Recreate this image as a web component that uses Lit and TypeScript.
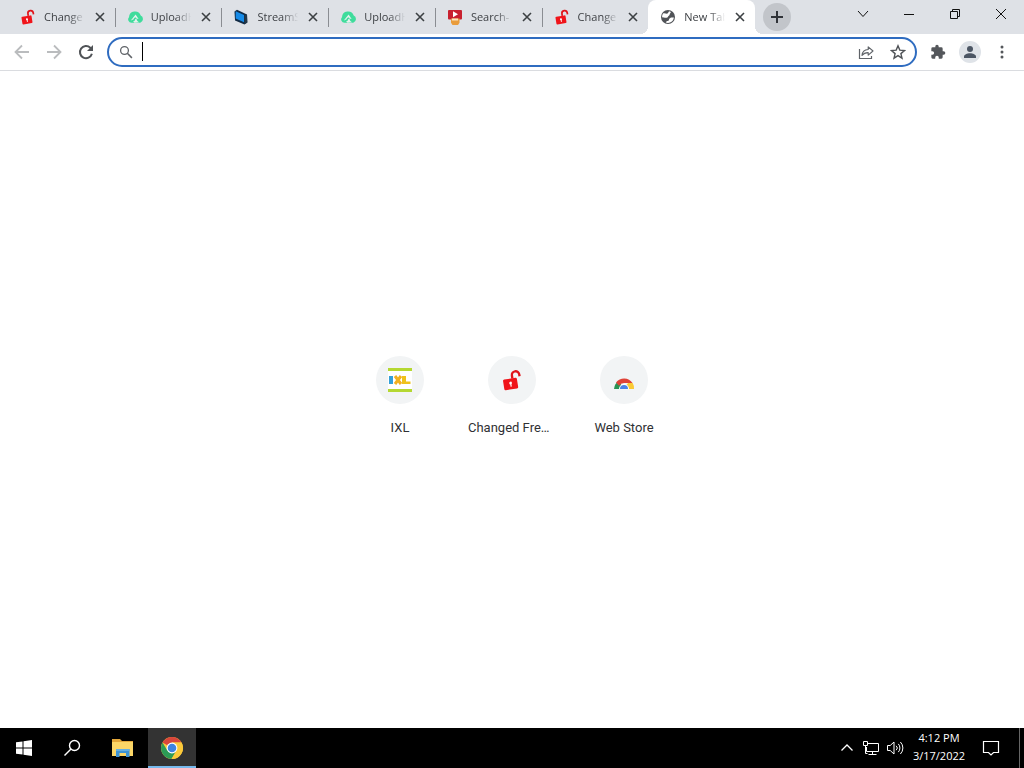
import { LitElement, html, css, svg, TemplateResult } from "lit";
import { customElement, property } from "lit/decorators.js";

const icon = (box: number, body: TemplateResult, size = box) =>
  html`<svg width=${size} height=${size} viewBox="0 0 ${box} ${box}" fill="none" aria-hidden="true">${body}</svg>`;

const lock = svg`<g transform="rotate(-9 8 9)"><path d="M8.6 7V4.8a2.7 2.7 0 0 1 5.4 0v1.4" stroke="#e0141a" stroke-width="1.700"/><rect x="1.600" y="6.800" width="10.200" height="7.800" rx="1" fill="#f0141a"/><circle cx="6.800" cy="10" r="1" fill="#fff"/><path d="M6.400 10h.9v2.700h-.9z" fill="#fff"/></g>`;
const cloud = svg`<path d="M4.500 13.700A3.300 3.300 0 0 1 2 8.200 6 6 0 0 1 13.700 6.600a3.800 3.800 0 0 1-.4 7.100z" fill="#3fdc9c"/><path d="M3.800 11.500 8.600 5.600l3 4.300-2.100-.3c.1 2 .9 3 2.600 3.600l-4.600.6c-1.300-.9-1.600-2-1.300-3.300z" fill="#e6f1ee"/><path d="M6 12.200c-.4-1.300 1-2.900 2.300-3.900l1.700 1.300-1.700.3c-.2 1.400-.9 2.200-2.300 2.300z" fill="#3fdc9c"/>`;
const stream = svg`<path d="M1.500 2.500 4 .8l10 4.600.5 8.200-3 2L2 11.500z" fill="#122b45"/><path d="M2.700 2.300 11 6v7.200L2.700 9.500z" fill="#168be8"/><path d="M11.400 6.300 14 5.700v7.800l-2.600 1.600z" fill="#243746"/>`;
const searchPlay = svg`<path d="M1 2a1 1 0 0 1 1-1h12a1 1 0 0 1 1 1v7.500a1 1 0 0 1-1 1H2a1 1 0 0 1-1-1z" fill="#c8202f"/><path d="M6 2.300v6l5-3z" fill="#fff"/><path d="M4 9.500h8.500v4.300L11 16H5.500L4 13.800z" fill="#e99c3c"/><path d="M5 9.500h6v2H5z" fill="#fbe3bd"/>`;
const globe = svg`<circle cx="8" cy="8" r="7" fill="#505357"/><path d="M3 4.500C4.500 3.800 6 4.800 7.300 4.600 8.500 4.400 8 2.600 9.500 2.300l1.400.6c-.2 1.400-1.500 1.600-1.200 2.700.3.900-1.300 1.300-1.700 2.100C7.600 8.700 6.500 9 5 8.700 4 8.500 2.800 8.200 2 8.400c0-1.500.3-2.800 1-3.900z" fill="#fff"/><path d="M9.800 9.200c1.300-1 2.700-.6 4.100-.7-.3 2.200-1.500 3.900-3.300 4.800-1.500.8-3.300.9-4.800.3.200-1 .9-1.600 2-1.600 1.500 0 .7-1.900 2-2.800z" fill="#fff"/>`;

const plusIcon = icon(14, svg`<path d="M7 1v12M1 7h12" stroke="#303338" stroke-width="2"/>`);
const tabClose = icon(10, svg`<path d="m1 1 8 8M9 1 1 9" stroke="#3c4043" stroke-width="1.600"/>`);

@customElement("browser-tab")
class BrowserTab extends LitElement {
  @property() label = "";
  @property({ type: Boolean, reflect: true }) active = false;
  @property({ type: Boolean, reflect: true }) divided = false;
  @property({ attribute: false }) glyph: TemplateResult = globe;

  static styles = css`
    :host { display: block; flex: 1 1 0; min-width: 0; position: relative; }
    .tab { display: flex; align-items: center; height: 34px; box-sizing: border-box; padding: 0 7px 0 12px; }
    :host([active]) .tab { background: #fff; border-radius: 8px 8px 0 0; }
    :host([active])::before, :host([active])::after {
      content: ""; position: absolute; bottom: 0; width: 8px; height: 8px;
    }
    :host([active])::before { left: -8px; background: radial-gradient(circle at 0 0, transparent 8px, #fff 8px); }
    :host([active])::after { right: -8px; background: radial-gradient(circle at 100% 0, transparent 8px, #fff 8px); }
    :host([divided])::after {
      content: ""; position: absolute; right: -1px; top: 8px; width: 1px; height: 19px; background: #8a8d92;
    }
    .glyph { flex: none; width: 16px; height: 16px; }
    .title {
      flex: 1; min-width: 0; margin: 0 6px 0 8px; padding: 0; border: 0; background: none; text-align: left;
      font: 11px/16px "Open Sans", "Noto Sans", sans-serif; color: #3c3f43; white-space: nowrap; overflow: hidden;
      -webkit-mask-image: linear-gradient(90deg, #000 60%, transparent 98%);
      mask-image: linear-gradient(90deg, #000 60%, transparent 98%);
    }
    .close { flex: none; display: grid; place-items: center; width: 16px; height: 16px; padding: 0; border: 0; background: none; }
  `;

  render() {
    return html`<div class="tab">
      <span class="glyph">${icon(16, this.glyph)}</span>
      <button class="title">${this.label}</button>
      <button class="close" aria-label="Close tab">${tabClose}</button>
    </div>`;
  }
}

const tabs = [
  { label: "Change", glyph: lock },
  { label: "UploadH", glyph: cloud },
  { label: "StreamS", glyph: stream },
  { label: "UploadH", glyph: cloud },
  { label: "Search-", glyph: searchPlay },
  { label: "Change", glyph: lock },
  { label: "New Tab", glyph: globe },
];

const ixl = svg`<path d="M0 0h24v24H0z" fill="#fff"/><path d="M0 0h24v3H0zM0 21h24v3H0z" fill="#b5d832"/><path d="M1 8h4v8H1z" fill="#35a0d8"/><path d="m7 8 6 8M13 8l-6 8" stroke="#f2b01e" stroke-width="3"/><path d="M14 8h4v5.500h4.500V16H14z" fill="#eec21b"/>`;
const store = svg`<path d="M2 21a10 10 0 0 1 5-8l3 5.200A4 4 0 0 0 8 21z" fill="#2a9354"/><path d="M4 14.500a10 10 0 0 1 16.500.5H12a6 6 0 0 0-5 2.800z" fill="#df4237"/><path d="M16 15h4.700a10 10 0 0 1 1.300 6h-5.500a5 5 0 0 0-2-4z" fill="#fbc935"/><path d="M7 21a5 5 0 0 1 10 0z" fill="#fff"/><path d="M8 21a4 4 0 0 1 8 0z" fill="#4a82e8"/>`;

const shortcuts = [
  { name: "IXL", art: icon(24, ixl) },
  { name: "Changed Free Proxy", art: icon(16, lock, 22) },
  { name: "Web Store", art: icon(24, store) },
];

@customElement("app-root")
class AppRoot extends LitElement {
  static styles = css`
    :host { display: flex; flex-direction: column; min-height: 100vh; background: #fff; color: #202124; font-family: Roboto, sans-serif; }
    button { padding: 0; border: 0; background: none; color: inherit; font: inherit; }
    svg { display: block; }
    .strip { display: flex; height: 34px; padding-left: 8px; background: #dee1e6; }
    .tabs { display: flex; flex: 0 1 747px; min-width: 0; }
    .add { flex: none; display: grid; place-items: center; width: 28px; height: 28px; margin: 3px 0 0 8px; border-radius: 50%; background: #c2c5ca; }
    .window { display: flex; flex: none; margin-left: auto; }
    .window button { display: grid; place-items: center; width: 46px; height: 28px; }

    .toolbar { display: flex; align-items: center; height: 36px; padding: 0 6px; border-bottom: 1px solid #dadce0; }
    .tool { flex: none; display: grid; place-items: center; width: 32px; height: 32px; }
    .avatar { display: grid; place-items: center; width: 22px; height: 22px; border-radius: 50%; background: #dfe3e8; }
    .omnibox { flex: 1; min-width: 0; display: flex; align-items: center; box-sizing: border-box; height: 30px; margin: 0 5px; padding: 0 1px 0 10px; border: 2px solid #2f6cc0; border-radius: 15px; }
    .omnibox label { flex: none; }
    .caret { flex: none; width: 1px; height: 19px; margin: 0 0 2px 9px; background: #000; }
    .omnibox input { flex: 1; min-width: 0; padding: 0; border: 0; outline: 0; background: none; font: 14px/20px Roboto, sans-serif; }
    .omnibox .tool { height: 26px; }

    main { flex: 1; display: flex; align-items: center; justify-content: center; padding-bottom: 7px; }
    .shortcut { display: flex; flex-direction: column; align-items: center; gap: 16px; width: 112px; color: #303134; text-decoration: none; }
    .disc { display: grid; place-items: center; width: 48px; height: 48px; border-radius: 50%; background: #f2f4f5; }
    .name { width: 88px; overflow: hidden; text-overflow: ellipsis; white-space: nowrap; text-align: center; font-size: 13px; line-height: 16px; }

    .taskbar { display: flex; height: 40px; background: #000; color: #fff; }
    .app { display: grid; place-items: center; width: 48px; height: 40px; }
    .app.files { width: 52px; padding-left: 2px; }
    .app.running { box-sizing: border-box; padding-top: 2px; background: #333; border-bottom: 2px solid #76b9ed; }
    .tray { display: flex; margin-left: auto; }
    .status { display: grid; place-items: center; width: 24px; height: 40px; }
    .clock { width: 64px; text-align: center; font: 11px/18px "Open Sans", "Noto Sans", sans-serif; padding-bottom: 2px; }
    .clock time { display: block; }
    .notices { display: grid; place-items: center; width: 40px; height: 40px; }
    .peek { width: 5px; height: 40px; margin-left: 8px; border-left: 1px solid #666; }
  `;

  render() {
    return html`
      <header>
        <div class="strip">
          <nav class="tabs" aria-label="Tabs">
            ${tabs.map((t, i) => html`<browser-tab .label=${t.label} .glyph=${t.glyph} ?active=${i === tabs.length - 1} ?divided=${i < tabs.length - 2}></browser-tab>`)}
          </nav>
          <button class="add" aria-label="New tab">${plusIcon}</button>
          <div class="window">
            <button aria-label="Search tabs">${icon(12, svg`<path d="m1 3 5 5.500L11 3" stroke="#111"/>`)}</button>
            <button aria-label="Minimize">${icon(10, svg`<path d="M0 5.500h10" stroke="#111"/>`)}</button>
            <button aria-label="Restore">${icon(10, svg`<path d="M.5 2.500h7v7h-7zM2.500 2.500v-2h7v7h-2" stroke="#111"/>`)}</button>
            <button aria-label="Close">${icon(12, svg`<path d="m1 1 10 10M11 1 1 11" stroke="#111"/>`)}</button>
          </div>
        </div>
        <div class="toolbar">
          <button class="tool" aria-label="Back">${icon(16, svg`<path d="M15 8H2M8 1.500 1.500 8 8 14.500" stroke="#babcbe" stroke-width="1.800"/>`)}</button>
          <button class="tool" aria-label="Forward">${icon(16, svg`<path d="M1 8h13M8 1.500 14.500 8 8 14.500" stroke="#babcbe" stroke-width="1.800"/>`)}</button>
          <button class="tool" aria-label="Reload">${icon(16, svg`<path d="M13.900 9.800A6.100 6.100 0 1 1 12.300 3.700L14 5.400" stroke="#505357" stroke-width="2"/><path d="M15 1v6H9z" fill="#505357"/>`)}</button>
          <div class="omnibox">
            <label for="address" aria-label="Search or type a URL">${icon(14, svg`<circle cx="5.500" cy="5.500" r="3.900" stroke="#5f6368" stroke-width="1.300"/><path d="m8.300 8.300 4.600 4.600" stroke="#5f6368" stroke-width="1.500"/>`)}</label>
            <span class="caret"></span>
            <input id="address" type="text" autocomplete="off" />
            <button class="tool" aria-label="Share">${icon(16, svg`<path d="M1.500 5v9.500h12V12" stroke="#5f6368" stroke-width="1.200"/><path d="M4 11.500c.3-4 2.600-5.900 6.200-6V2.800L15 7l-4.800 4.200V8.600C7.500 8.500 5.600 9.400 4 11.500z" stroke="#5f6368" stroke-width="1.100" stroke-linejoin="round"/>`)}</button>
            <button class="tool" aria-label="Bookmark">${icon(16, svg`<path d="m8 1.800 1.800 4.300 4.700.4-3.600 3.100 1.100 4.600L8 11.700l-4 2.500 1.100-4.600-3.600-3.100 4.700-.4z" stroke="#505357" stroke-width="1.400"/>`)}</button>
          </div>
          <button class="tool" aria-label="Extensions">${icon(24, svg`<path d="M20.500 11H19V7a2 2 0 0 0-2-2h-4V3.500a2.500 2.500 0 0 0-5 0V5H4a2 2 0 0 0-2 2v3.800h1.500a2.700 2.700 0 0 1 0 5.400H2V20a2 2 0 0 0 2 2h3.800v-1.500a2.700 2.700 0 0 1 5.400 0V22H17a2 2 0 0 0 2-2v-4h1.500a2.500 2.500 0 0 0 0-5z" fill="#54575b"/>`, 16)}</button>
          <button class="tool" aria-label="Profile"><span class="avatar">${icon(14, svg`<circle cx="7" cy="4" r="3" fill="#4c5664"/><path d="M1 13v-1.500C1 9.500 4 8.200 7 8.200s6 1.300 6 3.300V13z" fill="#4c5664"/>`)}</span></button>
          <button class="tool" aria-label="Menu">${icon(16, svg`<circle cx="8" cy="3" r="1.500" fill="#54575b"/><circle cx="8" cy="8" r="1.500" fill="#54575b"/><circle cx="8" cy="13" r="1.500" fill="#54575b"/>`)}</button>
        </div>
      </header>
      <main>
        ${shortcuts.map((s) => html`<a class="shortcut" href="#"><span class="disc">${s.art}</span><span class="name">${s.name}</span></a>`)}
      </main>
      <footer class="taskbar">
        <button class="app" aria-label="Start">${icon(16, svg`<path d="M0 2.300 6.500 1.400v6.100H0zM7.500 1.200 16 0v7.500H7.500zM0 8.500h6.500v6.100L0 13.700zM7.500 8.500H16V16l-8.500-1.200z" fill="#fff"/>`)}</button>
        <button class="app" aria-label="Search">${icon(18, svg`<circle cx="11.500" cy="6.500" r="5" stroke="#fff" stroke-width="1.400"/><path d="M8 10 1.500 16.500" stroke="#fff" stroke-width="1.500"/>`)}</button>
        <button class="app files" aria-label="File Explorer">${icon(22, svg`<path d="M0 2h8l2 2h11v15H0z" fill="#e3a73a"/><path d="M0 5h21v14H0z" fill="#fbd667"/><path d="M4 12h13.500v8h-3.500v-4H7.500v4H4z" fill="#3d93d4"/><path d="M4 12h13.500v2H4z" fill="#64afe2"/>`)}</button>
        <button class="app running" aria-label="Chrome">${icon(24, svg`<circle cx="12" cy="12" r="11" fill="#fbc93a"/><path d="M12 12 2.500 6.500a11 11 0 0 1 19 0H12z" fill="#d9463b"/><path d="M2.500 6.500a11 11 0 0 0 9 16.500L16.500 14.500 12 12 7.300 14.500z" fill="#2c9b56"/><path d="M12 6.500h9.500A11 11 0 0 1 11.500 23l5-8.500z" fill="#fbc93a"/><circle cx="12" cy="12" r="5.400" fill="#fff"/><circle cx="12" cy="12" r="4.300" fill="#3f83e0"/>`)}</button>
        <div class="tray">
          <button class="status" aria-label="Hidden icons">${icon(12, svg`<path d="m.5 8.500 5.500-5.500 5.500 5.500" stroke="#fff" stroke-width="1.300"/>`)}</button>
          <button class="status" aria-label="Network">${icon(18, svg`<path d="M6 4.500h10.500v8H4.500V8M10.500 12.500v3M6.500 15.500h8M1.500 2.500h4v4h-4zM3.500 6.500v8h2" stroke="#fff"/>`)}</button>
          <button class="status" aria-label="Volume">${icon(18, svg`<path d="M1.500 6.500h2.700L8 3v12l-3.800-3.500H1.500zM10.200 6.800a3 3 0 0 1 0 4.400M12.300 4.900a6 6 0 0 1 0 8.200M14.400 3a8.500 8.500 0 0 1 0 12" stroke="#fff"/>`)}</button>
          <button class="clock"><time>4:12 PM</time><time>3/17/2022</time></button>
          <button class="notices" aria-label="Notifications">${icon(18, svg`<path d="M1.500 2.500h15v11h-5L9 16l-2.500-2.500h-5z" stroke="#fff" stroke-width="1.200"/>`)}</button>
          <button class="peek" aria-label="Show desktop"></button>
        </div>
      </footer>
    `;
  }
}
